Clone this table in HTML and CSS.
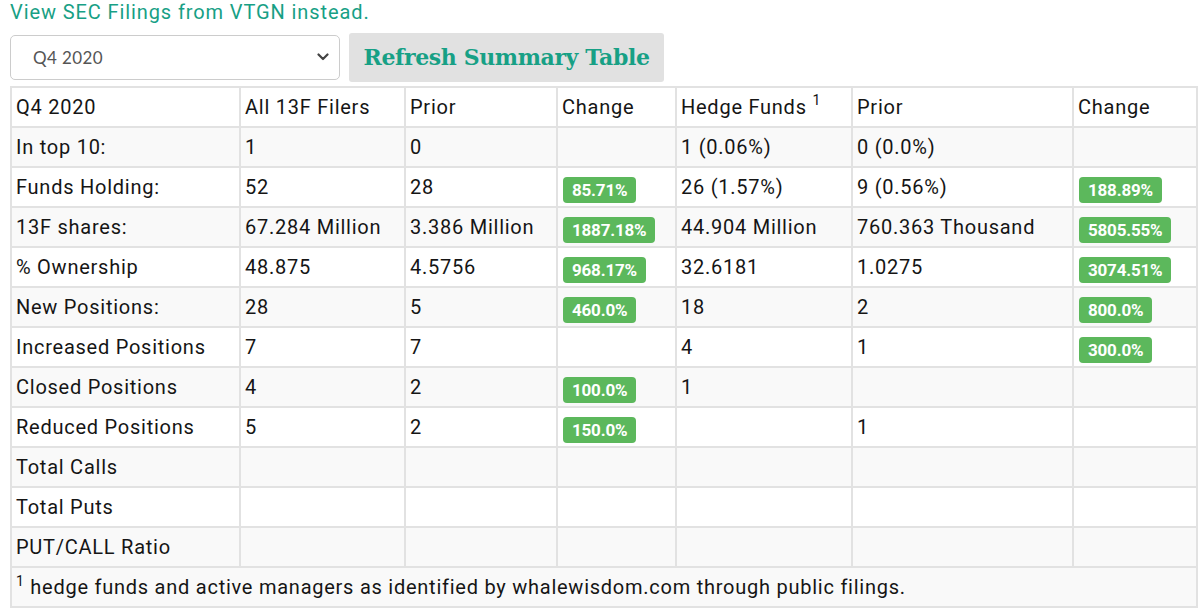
FILE: index.html
```html
<!DOCTYPE html>
<html>
<head>
<meta charset="utf-8">
<link rel="stylesheet" href="styles.css">
</head>
<body>
<div class="page">
  <a class="sec-link" href="#">View SEC Filings from VTGN instead.</a>
  <div class="controls">
    <div class="select">
      <span class="select-text">Q4 2020</span>
      <svg class="chev" width="12" height="8" viewBox="0 0 12 8"><path d="M1.5 1.5 L6 6 L10.5 1.5" fill="none" stroke="#444" stroke-width="2.2" stroke-linecap="round" stroke-linejoin="round"/></svg>
    </div>
    <button class="refresh">Refresh Summary Table</button>
  </div>
  <table class="summary">
    <colgroup>
      <col class="c1"><col class="c2"><col class="c3"><col class="c4"><col class="c5"><col class="c6"><col class="c7">
    </colgroup>
    <thead>
      <tr><th>Q4 2020</th><th>All 13F Filers</th><th>Prior</th><th>Change</th><th>Hedge Funds <sup>1</sup></th><th>Prior</th><th>Change</th></tr>
    </thead>
    <tbody>
      <tr><td>In top 10:</td><td>1</td><td>0</td><td></td><td>1 (0.06%)</td><td>0 (0.0%)</td><td></td></tr>
      <tr><td>Funds Holding:</td><td>52</td><td>28</td><td><span class="badge">85.71%</span></td><td>26 (1.57%)</td><td>9 (0.56%)</td><td><span class="badge">188.89%</span></td></tr>
      <tr><td>13F shares:</td><td>67.284 Million</td><td>3.386 Million</td><td><span class="badge">1887.18%</span></td><td>44.904 Million</td><td>760.363 Thousand</td><td><span class="badge">5805.55%</span></td></tr>
      <tr><td>% Ownership</td><td>48.875</td><td>4.5756</td><td><span class="badge">968.17%</span></td><td>32.6181</td><td>1.0275</td><td><span class="badge">3074.51%</span></td></tr>
      <tr><td>New Positions:</td><td>28</td><td>5</td><td><span class="badge">460.0%</span></td><td>18</td><td>2</td><td><span class="badge">800.0%</span></td></tr>
      <tr><td>Increased Positions</td><td>7</td><td>7</td><td></td><td>4</td><td>1</td><td><span class="badge">300.0%</span></td></tr>
      <tr><td>Closed Positions</td><td>4</td><td>2</td><td><span class="badge">100.0%</span></td><td>1</td><td></td><td></td></tr>
      <tr><td>Reduced Positions</td><td>5</td><td>2</td><td><span class="badge">150.0%</span></td><td></td><td>1</td><td></td></tr>
      <tr><td>Total Calls</td><td></td><td></td><td></td><td></td><td></td><td></td></tr>
      <tr><td>Total Puts</td><td></td><td></td><td></td><td></td><td></td><td></td></tr>
      <tr><td>PUT/CALL Ratio</td><td></td><td></td><td></td><td></td><td></td><td></td></tr>
      <tr class="foot"><td colspan="7"><sup>1</sup> hedge funds and active managers as identified by whalewisdom.com through public filings.</td></tr>
    </tbody>
  </table>
</div>
</body>
</html>
```
FILE: styles.css
```css
html, body {
  margin: 0;
  padding: 0;
  background: #fff;
}
.page {
  padding: 0 4px 0 10px;
  font-family: Roboto, "Liberation Sans", sans-serif;
  color: #151515;
}
.sec-link {
  display: block;
  font-size: 20px;
  line-height: 24px;
  letter-spacing: 0.9px;
  color: #17a085;
  text-decoration: none;
}
.controls {
  display: flex;
  align-items: center;
  gap: 9px;
  margin-top: 8px;
  height: 50px;
}
.select {
  box-sizing: border-box;
  width: 330px;
  height: 45px;
  border: 1px solid #ccc;
  border-radius: 5px;
  display: flex;
  align-items: center;
  justify-content: space-between;
  padding: 0 10px 0 22px;
  background: #fff;
}
.select-text {
  font-family: Lato, "Open Sans", sans-serif;
  font-size: 17px;
  letter-spacing: 0.4px;
  color: #555;
}
.refresh {
  box-sizing: border-box;
  width: 315px;
  height: 49px;
  border: none;
  border-radius: 3px;
  background: #e1e1e1;
  color: #17a085;
  font-family: "DejaVu Serif", serif;
  font-weight: bold;
  font-size: 22px;
  letter-spacing: -0.4px;
  padding: 0;
}
.summary {
  margin-top: 4px;
  border-collapse: collapse;
  table-layout: fixed;
  width: 1186px;
  font-size: 20px;
  letter-spacing: 0.75px;
  border: 2px solid #ddd;
}
.c1 { width: 229px; }
.c2 { width: 165px; }
.c3 { width: 152px; }
.c4 { width: 119px; }
.c5 { width: 176px; }
.c6 { width: 221px; }
.c7 { width: 124px; }
.summary th,
.summary td {
  border: 2px solid #e2e2e2;
  text-align: left;
  vertical-align: top;
  padding: 7px 5px 7px 4px;
  height: 24px;
  line-height: 24px;
  font-weight: normal;
  white-space: nowrap;
}
.summary th sup {
  font-size: 14px;
  line-height: 0;
  vertical-align: 9px;
}
.summary tbody tr:nth-child(odd) {
  background: #f9f9f9;
}
.summary tbody tr.foot {
  background: #f9f9f9;
}
.foot td sup {
  font-size: 14px;
  line-height: 0;
  vertical-align: 8px;
}
.badge {
  display: inline-block;
  vertical-align: top;
  position: relative;
  top: 2px;
  margin-left: 1px;
  margin-bottom: -4px;
  background: #5cb85c;
  color: #fff;
  font-weight: bold;
  font-size: 17px;
  line-height: 18px;
  height: 18px;
  padding: 4px 9px;
  border-radius: 4px;
  letter-spacing: -0.2px;
}
```
